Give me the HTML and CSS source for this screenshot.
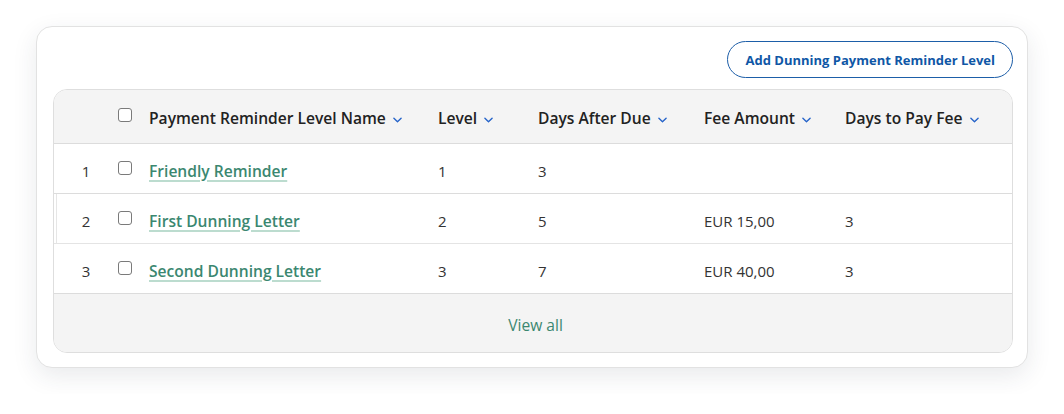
FILE: index.html
```html
<!DOCTYPE html>
<html lang="en">
<head>
<meta charset="utf-8">
<title>Dunning Payment Reminder Levels</title>
<link rel="stylesheet" href="styles.css">
</head>
<body>
<div class="card">
  <div class="toolbar">
    <button class="btn-outline" type="button">Add Dunning Payment Reminder Level</button>
  </div>
  <div class="table">
    <div class="row head">
      <div class="c-idx"></div>
      <div class="c-chk"><span class="checkbox"></span></div>
      <div class="c-name">Payment Reminder Level Name <svg class="chev" viewBox="0 0 10 6"><path d="M1 1l4 4 4-4"/></svg></div>
      <div class="c-level">Level <svg class="chev" viewBox="0 0 10 6"><path d="M1 1l4 4 4-4"/></svg></div>
      <div class="c-days">Days After Due <svg class="chev" viewBox="0 0 10 6"><path d="M1 1l4 4 4-4"/></svg></div>
      <div class="c-fee">Fee Amount <svg class="chev" viewBox="0 0 10 6"><path d="M1 1l4 4 4-4"/></svg></div>
      <div class="c-pay">Days to Pay Fee <svg class="chev" viewBox="0 0 10 6"><path d="M1 1l4 4 4-4"/></svg></div>
    </div>
    <div class="row body">
      <div class="c-idx">1</div>
      <div class="c-chk"><span class="checkbox"></span></div>
      <div class="c-name"><a class="link" href="#">Friendly Reminder</a></div>
      <div class="c-level">1</div>
      <div class="c-days">3</div>
      <div class="c-fee"></div>
      <div class="c-pay"></div>
    </div>
    <div class="row body active">
      <div class="c-idx">2</div>
      <div class="c-chk"><span class="checkbox"></span></div>
      <div class="c-name"><a class="link" href="#">First Dunning Letter</a></div>
      <div class="c-level">2</div>
      <div class="c-days">5</div>
      <div class="c-fee">EUR 15,00</div>
      <div class="c-pay">3</div>
    </div>
    <div class="row body">
      <div class="c-idx">3</div>
      <div class="c-chk"><span class="checkbox"></span></div>
      <div class="c-name"><a class="link" href="#">Second Dunning Letter</a></div>
      <div class="c-level">3</div>
      <div class="c-days">7</div>
      <div class="c-fee">EUR 40,00</div>
      <div class="c-pay">3</div>
    </div>
    <div class="footer"><a class="view-all" href="#">View all</a></div>
  </div>
</div>
</body>
</html>
```

FILE: styles.css
```css
* { box-sizing: border-box; }

html, body {
  margin: 0;
  background: #ffffff;
}

body {
  padding: 26px 36px;
  font-family: "Open Sans", "Noto Sans", sans-serif;
  color: #2b2b2b;
  font-size: 15px;
}

.card {
  width: 992px;
  height: 342px;
  background: #fff;
  border: 1px solid #e2e2e2;
  border-radius: 16px;
  box-shadow: 0 8px 24px rgba(40, 50, 70, 0.10);
  padding: 14px 14px 14px 16px;
  display: flex;
  flex-direction: column;
  gap: 11px;
}

.toolbar {
  display: flex;
  justify-content: flex-end;
}

.btn-outline {
  height: 37px;
  padding: 0 17px;
  border: 1px solid #1d5ea8;
  border-radius: 19px;
  background: #fff;
  color: #0f57a6;
  font-family: "Open Sans", "Noto Sans", sans-serif;
  font-size: 13px;
  font-weight: 700;
  letter-spacing: 0;
}

.table {
  border: 1px solid #dedede;
  border-radius: 14px;
  overflow: hidden;
  background: #fff;
}

.row {
  display: grid;
  grid-template-columns: 64px 31px 289px 100px 166px 141px 1fr;
  align-items: center;
  border-bottom: 1px solid #dcdcdc;
}

.row.head {
  height: 54px;
  padding-top: 3px;
  background: #f4f4f4;
  font-weight: 600;
  font-size: 15.6px;
  color: #222;
}

.row.body {
  height: 50px;
  padding-top: 4px;
  color: #333;
}

.row.body.active {
  box-shadow: inset 2px 0 0 #fff, inset 3px 0 0 #e6e6e6;
  border-bottom-color: #e4e4e4;
}

.c-idx {
  text-align: center;
}

.c-chk {
  display: flex;
  align-items: center;
}

.row.head .c-chk { padding-bottom: 6px; }
.row.body .c-chk { padding-bottom: 5px; }

.checkbox {
  display: inline-block;
  width: 14px;
  height: 14px;
  border: 1px solid #7a7a7a;
  border-radius: 3px;
  background: #fff;
}

.chev {
  width: 9px;
  height: 6px;
  margin-left: 3px;
  vertical-align: middle;
  fill: none;
  stroke: #2563c9;
  stroke-width: 1.5;
  stroke-linecap: round;
  stroke-linejoin: round;
}

.link {
  color: #3b8770;
  font-weight: 600;
  font-size: 15.6px;
  text-decoration: underline;
  text-decoration-color: #bcdccf;
  text-decoration-thickness: 2px;
  text-underline-offset: 3px;
}

.footer {
  height: 59px;
  background: #f4f4f4;
  display: flex;
  align-items: center;
  justify-content: center;
}

.view-all {
  color: #3b8770;
  font-weight: 500;
  text-decoration: none;
  font-size: 15.6px;
  padding-top: 2px;
  padding-left: 5px;
}
```
